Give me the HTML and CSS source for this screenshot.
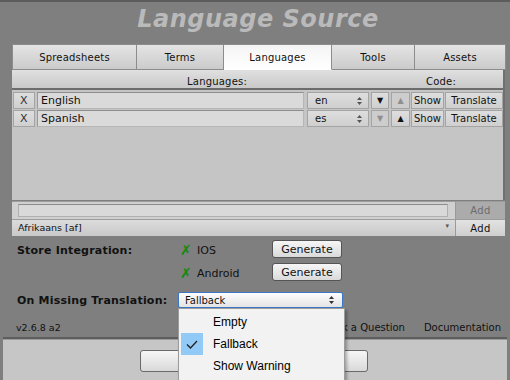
FILE: index.html
```html
<!doctype html>
<html lang="en">
<head>
    <meta charset="UTF-8">
    <title>Language Source</title>
    <link rel="stylesheet" href="styles.css">
</head>
<body>
    <div class="top-line"></div>
    <h1 class="title">Language Source</h1>
    <div class="tabs">
        <div class="tab t1">Spreadsheets</div>
        <div class="tab t2">Terms</div>
        <div class="tab t3 on">Languages</div>
        <div class="tab t4">Tools</div>
        <div class="tab t5">Assets</div>
    </div>
    <div class="panel">
        <div class="list-head">
            <span class="h-lang">Languages:</span>
            <span class="h-code">Code:</span>
        </div>
        <div class="rows">
            <div class="lang-row">
                <span class="cell del">X</span>
                <span class="cell name">English</span>
                <span class="cell code">en<svg class="updown" width="5" height="8" viewBox="0 0 5 8"><path d="M0 3h5L2.5 0zM0 5h5L2.5 8z" fill="#555"/></svg></span>
                <span class="cell mv">▼</span>
                <span class="cell mv up off">▲</span>
                <span class="cell show">Show</span>
                <span class="cell tr">Translate</span>
            </div>
            <div class="lang-row">
                <span class="cell del">X</span>
                <span class="cell name">Spanish</span>
                <span class="cell code">es<svg class="updown" width="5" height="8" viewBox="0 0 5 8"><path d="M0 3h5L2.5 0zM0 5h5L2.5 8z" fill="#555"/></svg></span>
                <span class="cell mv off">▼</span>
                <span class="cell mv up">▲</span>
                <span class="cell show">Show</span>
                <span class="cell tr">Translate</span>
            </div>
        </div>
    </div>
    <div class="new-row">
        <span class="new-input"></span>
        <span class="add-btn off">Add</span>
    </div>
    <div class="pick-row">
        <span class="pick">Afrikaans [af]<span class="pick-arrow">▾</span></span>
        <span class="add-btn">Add</span>
    </div>
    <div class="store">
        <span class="label">Store Integration:</span>
        <span class="ok">✗</span>
        <span class="plat">IOS</span>
        <span class="gen">Generate</span>
        <span class="label"></span>
        <span class="ok">✗</span>
        <span class="plat">Android</span>
        <span class="gen">Generate</span>
    </div>
    <div class="missing">
        <span class="label">On Missing Translation:</span>
        <span class="select">Fallback<svg class="updown" width="5" height="8" viewBox="0 0 5 8"><path d="M0 3h5L2.5 0zM0 5h5L2.5 8z" fill="#333"/></svg></span>
    </div>
    <div class="footer">
        <span class="ver">v2.6.8 a2</span>
        <span class="link">Ask a Question</span>
        <span class="link">Documentation</span>
    </div>
    <div class="bottom">
        <div class="big-btn"></div>
    </div>
    <div class="popup">
        <div class="item">Empty</div>
        <div class="item checked">
            <span class="check"><svg width="12" height="9" viewBox="0 0 12 9"><path d="M1 4.5l3.5 3.5 6.5-7" fill="none" stroke="#222" stroke-width="1.3"/></svg></span>
            Fallback
        </div>
        <div class="item">Show Warning</div>
    </div>
</body>
</html>
```

FILE: styles.css
```css
*{
    margin: 0;
    padding: 0;
    box-sizing: border-box;
}
body{
    width: 510px;
    height: 380px;
    overflow: hidden;
    position: relative;
    background-color: #7f7f7f;
    font-family: "DejaVu Sans", sans-serif;
    color: #111;
}
.top-line{
    height: 2px;
    background-color: #5c5c5c;
}
.title{
    margin: 3px 0 11px;
    padding-left: 6px;
    height: 28px;
    line-height: 28px;
    font-size: 24px;
    font-weight: bold;
    font-style: italic;
    letter-spacing: 0.5px;
    color: #bababa;
    text-align: center;
}
.tabs{
    display: flex;
    margin-left: 12px;
    width: 494px;
    height: 26px;
}
.tab{
    display: flex;
    align-items: center;
    justify-content: center;
    border: 1px solid #8c8c8c;
    border-left: none;
    background: linear-gradient(#e4e4e4, #cbcbcb);
    font-size: 10px;
    letter-spacing: 0.2px;
    padding-top: 1px;
}
.tab.t1{ width: 125px; border-left: 1px solid #8c8c8c; }
.tab.t2{ width: 87px; }
.tab.t3{ width: 108px; }
.tab.t4{ width: 83px; }
.tab.t5{ width: 91px; }
.tab.on{
    background: linear-gradient(#f4f4f4, #ffffff);
    border-bottom-color: #fff;
}
.panel{
    margin-left: 12px;
    width: 493px;
    height: 130px;
    background-color: #c5c5c5;
    border-right: 2px solid #707070;
}
.list-head{
    display: flex;
    height: 20px;
    padding-top: 6px;
    line-height: 12px;
    font-size: 10px;
    letter-spacing: 0.2px;
    background: linear-gradient(#e0e0e0, #c9c9c9);
    border-bottom: 2px solid #6c6c6c;
}
.h-lang{
    width: 235px;
    text-align: right;
}
.h-code{
    padding-left: 179px;
}
.rows{
    padding: 2px 0 0 1px;
}
.lang-row{
    display: flex;
    height: 17px;
    margin-bottom: 1px;
}
.cell{
    display: flex;
    align-items: center;
    justify-content: center;
    height: 17px;
    border: 1px solid #a4a4a4;
    background: linear-gradient(#dedede, #cfcfcf);
    font-size: 10px;
}
.del{
    width: 22px;
    justify-content: flex-start;
    padding-left: 6px;
    font-size: 11px;
    color: #333;
}
.name{
    margin-left: 2px;
    width: 267px;
    justify-content: flex-start;
    padding-left: 3px;
    font-size: 11px;
    background: #dadada;
    border-color: #8e8e8e #b6b6b6 #b6b6b6 #9a9a9a;
}
.code{
    margin-left: 3px;
    width: 62px;
    justify-content: space-between;
    padding: 0 6px 0 7px;
}
.mv{
    margin-left: 2px;
    width: 18px;
    font-size: 8px;
}
.mv.up{
    width: 19px;
}
.mv.off{
    color: #8f8f8f;
    background: #cdcdcd;
}
.show{
    margin-left: 1px;
    width: 33px;
}
.tr{
    margin-left: 1px;
    width: 58px;
}
.new-row{
    display: flex;
    margin: 1px 0 0 12px;
    width: 493px;
    height: 18px;
    background-color: #d0d0d0;
    border-top: 1px solid #9c9c9c;
}
.new-input{
    margin: 2px 0 0 6px;
    width: 430px;
    height: 13px;
    background-color: #d9d9d9;
    border: 1px solid #b0b0b0;
    border-top-color: #8c8c8c;
}
.add-btn{
    margin-left: auto;
    width: 50px;
    display: flex;
    align-items: center;
    justify-content: center;
    font-size: 10px;
    letter-spacing: 0.3px;
    background: linear-gradient(#e2e2e2, #cfcfcf);
    border-left: 1px solid #9a9a9a;
}
.add-btn.off{
    background: #ababab;
    color: #6c6c6c;
}
.pick-row{
    display: flex;
    margin-left: 12px;
    width: 493px;
    height: 17px;
    border-top: 1px solid #9c9c9c;
    background: linear-gradient(#dcdcdc, #c9c9c9);
}
.pick{
    position: relative;
    width: 443px;
    padding: 2px 0 0 6px;
    font-size: 9.5px;
}
.pick-arrow{
    position: absolute;
    right: 6px;
    top: 2px;
    font-size: 7px;
    color: #555;
}
.store{
    display: grid;
    grid-template-columns: 163px 17px 75px 70px;
    grid-auto-rows: 18px;
    row-gap: 5px;
    align-items: center;
    margin-top: 4px;
    padding-left: 17px;
}
.label{
    font-size: 11px;
    font-weight: bold;
    letter-spacing: 0.2px;
    padding-top: 3px;
}
.ok{
    color: #0e8a0e;
    font-size: 14px;
    font-weight: bold;
    padding-top: 2px;
    line-height: 14px;
}
.plat{
    font-size: 11px;
    padding-top: 3px;
}
.gen{
    display: flex;
    align-items: center;
    justify-content: center;
    height: 18px;
    font-size: 11px;
    background: linear-gradient(#f6f6f6, #dadada);
    border: 1px solid #555;
    border-radius: 3px;
}
.missing{
    display: flex;
    align-items: center;
    margin-top: 11px;
    padding-left: 17px;
    height: 16px;
}
.missing .label{
    width: 161px;
    padding-top: 0;
}
.select{
    display: flex;
    align-items: center;
    justify-content: space-between;
    width: 165px;
    height: 16px;
    padding: 0 8px 0 6px;
    font-size: 10px;
    background: linear-gradient(#fdfdfd, #e4e4e4);
    border: 1px solid #3a78c6;
    border-radius: 2px;
}
.footer{
    display: flex;
    margin-top: 12px;
    height: 16px;
    line-height: 16px;
    padding: 0 9px 0 16px;
    font-size: 10px;
}
.ver{
    font-size: 9.5px;
}
.footer .link + .link{
    margin-left: 19px;
}
.ver + .link{
    margin-left: auto;
}
.bottom{
    margin: 1px 3px 0;
    height: 60px;
    background-color: #c6c6c6;
    border-top: 2px solid #5e5e5e;
    box-shadow: inset 0 1px 0 #9a9a9a;
    padding: 11px 0 0 137px;
}
.big-btn{
    width: 228px;
    height: 22px;
    background: linear-gradient(#f7f7f7, #d9d9d9);
    border: 1px solid #6a6a6a;
    border-radius: 3px;
}
.popup{
    position: absolute;
    left: 178px;
    top: 308px;
    width: 167px;
    height: 80px;
    padding-top: 2px;
    background-color: #f2f2f2;
    border: 1px solid #9c9c9c;
    box-shadow: 2px 2px 3px rgba(0,0,0,0.3);
    font-family: "Liberation Sans", Arial, sans-serif;
    font-size: 12px;
    color: #000;
}
.item{
    position: relative;
    height: 22px;
    line-height: 22px;
    padding-left: 34px;
}
.check{
    position: absolute;
    left: 2px;
    top: 0;
    width: 22px;
    height: 22px;
    background-color: #91c9f7;
    display: flex;
    align-items: center;
    justify-content: center;
}
```
